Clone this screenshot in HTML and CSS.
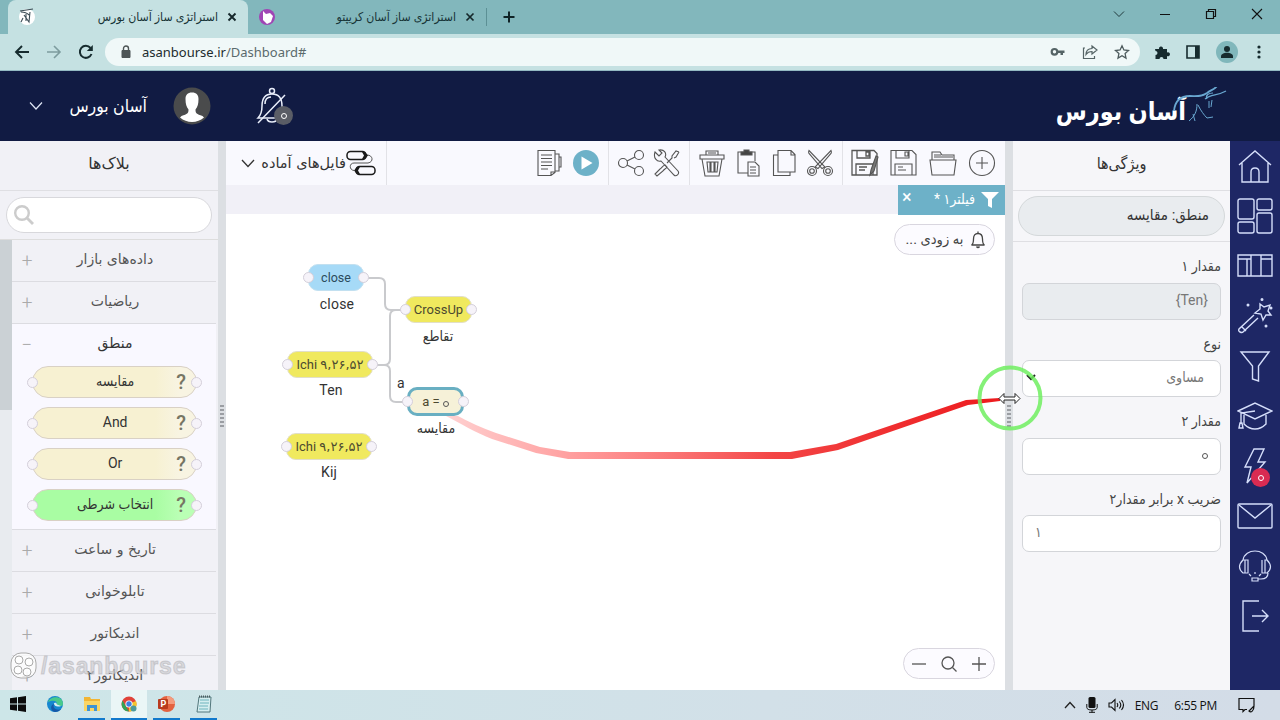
FILE: index.html
```
<!DOCTYPE html>
<html lang="fa">
  <head>
    <meta charset="utf-8">
    <title>استراتژی ساز آسان بورس</title>
    <link rel="stylesheet" href="styles.css">
  </head>
  <body>
    <div class="tabs">
      <div class="tab active">
        <svg width="18" height="18" viewBox="0 0 18 18"><circle cx="9" cy="9" r="8" fill="#fff"/><path d="M2 3l13-2M3 4c3 0 6 1 8 3M8 6v7M12 4l-1 10-5-7M5 10l-2 4" stroke="#3b4c55" stroke-width="1.100" fill="none"/></svg>
        <span class="name" dir="rtl">استراتژی ساز آسان بورس</span>
        <svg width="12" height="12" viewBox="0 0 12 12"><path d="M2.500 2.500l7 7m0-7l-7 7" stroke="#16282b" stroke-width="1.900"/></svg>
      </div>
      <div class="tab">
        <svg width="18" height="18" viewBox="0 0 18 18"><circle cx="9" cy="9" r="8" fill="#a045b5"/><path d="M5 3l3 3 4-1 3 3-2 6-4 2-4-4z" fill="#fff"/></svg>
        <span class="name" dir="rtl">استراتژی ساز آسان کریپتو</span>
        <svg width="12" height="12" viewBox="0 0 12 12"><path d="M2.500 2.500l7 7m0-7l-7 7" stroke="#16282b" stroke-width="1.700"/></svg>
      </div>
      <div class="newtab"><svg width="14" height="14" viewBox="0 0 14 14"><path d="M7 1.500v11M1.500 7h11" stroke="#0f2326" stroke-width="2"/></svg></div>
      <div class="winbtns">
        <svg width="14" height="14" viewBox="0 0 14 14"><path d="M2 4.500l5 5 5-5" fill="none" stroke="#20393c"/></svg>
        <svg width="14" height="14" viewBox="0 0 14 14"><path d="M2 7.500h10" stroke="#111"/></svg>
        <svg width="14" height="14" viewBox="0 0 14 14"><path d="M2.500 4.500h7v7h-7zM4.500 4.500v-2h7v7h-2" fill="none" stroke="#111" stroke-width="1.200"/></svg>
        <svg width="14" height="14" viewBox="0 0 14 14"><path d="M2 2l10 10m0-10L2 12" stroke="#111" stroke-width="1.100"/></svg>
      </div>
    </div>

    <div class="addressbar">
      <div class="navbtns">
        <svg width="16" height="16" viewBox="0 0 16 16"><path d="M15 8H2.500M8 2L2 8l6 6" fill="none" stroke="#162b2e" stroke-width="1.900"/></svg>
        <svg width="16" height="16" viewBox="0 0 16 16"><path d="M1 8h12.500M8 2l6 6-6 6" fill="none" stroke="#7d9c9e" stroke-width="1.600"/></svg>
        <svg width="16" height="16" viewBox="0 0 16 16"><path d="M13.500 10A6 6 0 1 1 12.500 4" fill="none" stroke="#162b2e" stroke-width="2"/><path d="M14.800 1v6h-6z" fill="#162b2e"/></svg>
      </div>
      <div class="omnibox">
        <svg width="12" height="14" viewBox="0 0 12 14"><path d="M2 5.500h8v7H2z" fill="#4d5556" stroke="#4d5556"/><path d="M3.500 6V3.500a2.500 2.500 0 0 1 5 0V6" fill="none" stroke="#4d5556" stroke-width="1.400"/></svg>
        <span class="url">asanbourse.ir<span>/Dashboard#</span></span>
        <svg width="16" height="16" viewBox="0 0 16 16"><path d="M8 6.500h6.500V9H13v2h-2.500V9H8z" fill="#556466"/><circle cx="4.500" cy="7.800" r="2.800" fill="none" stroke="#556466" stroke-width="2.200"/></svg>
        <svg width="16" height="16" viewBox="0 0 16 16"><path d="M3 4H1.500v10.500h11V12" fill="none" stroke="#556466" stroke-width="1.200"/><path d="M10 2l5 4-5 4V7.500c-3 0-5 1.500-6 3 0-3.500 2.500-5.800 6-6z" fill="none" stroke="#556466" stroke-width="1.200"/></svg>
        <svg width="16" height="16" viewBox="0 0 16 16"><path d="M8 1.800l1.900 4.200 4.600.5-3.400 3.100.9 4.500L8 11.800l-4 2.300.9-4.500L1.500 6.500 6.100 6z" fill="none" stroke="#4d5b5d" stroke-width="1.300"/></svg>
      </div>
      <div class="exts">
        <svg width="16" height="16" viewBox="0 0 16 16"><path d="M1 5h4a2 2 0 1 1 4-1v1h4v3.500a2 2 0 1 1 0 3.500v3H9.500a2 2 0 0 0-4 0H1.500v-4a2 2 0 0 0 0-4z" fill="#162b2e"/></svg>
        <svg width="16" height="16" viewBox="0 0 16 16"><path d="M2 2h12v12H2z" fill="none" stroke="#162b2e" stroke-width="1.600"/><path d="M10 2h4v12h-4z" fill="#162b2e"/></svg>
        <svg width="22" height="22" viewBox="0 0 22 22"><circle cx="11" cy="11" r="11" fill="#80b7bb"/><circle cx="11" cy="8" r="3" fill="#162b2e"/><path d="M5 17v-1.500c0-2.500 3-3.700 6-3.700s6 1.200 6 3.700V17z" fill="#162b2e"/></svg>
        <svg width="16" height="16" viewBox="0 0 16 16"><g fill="#162b2e"><circle cx="6" cy="3" r="1.600"/><circle cx="6" cy="8" r="1.600"/><circle cx="6" cy="13" r="1.600"/></g></svg>
      </div>
    </div>

    <div class="header">
      <svg width="14" height="10" viewBox="0 0 14 10"><path d="M1 1.500l6 6.500 6-6.500" fill="none" stroke="#dfe6f5" stroke-width="1.200"/></svg>
      <span class="user" dir="rtl">آسان بورس</span>
      <svg width="38" height="38" viewBox="0 0 38 38"><circle cx="19" cy="19" r="18.500" fill="#4a4b4c"/><path d="M12.500 12c0-4 2-6.500 6.500-6.500s6.500 2.500 6.500 6.500c0 5-1 8-3 10.500 0 4 1 4.500 7 6.500l1.500 1.500A18.500 18.500 0 0 1 7 30.500L8.500 29c6-2 7-2.500 7-6.500-2-2.500-3-5.500-3-10.500z" fill="#fff"/></svg>
      <div class="alarm">
        <svg width="34" height="38" viewBox="0 0 34 38"><g fill="none" stroke="#e9eefa" stroke-width="1.500"><path d="M2 31c3-3 4-6 4-12 0-7 3-12 10-12s10 5 10 12c0 6 1 9 4 12z"/><path d="M9 17c0-4 2-7 6-7"/><circle cx="16" cy="4" r="2.500"/><path d="M11 32c1 4 9 4 10 0M2 36L29 8"/></g></svg>
        <span class="badge grey"><span class="zero">۰</span></span>
      </div>
      <div class="logo">
        <span dir="rtl">آسان بورس</span>
        <svg width="54" height="38" viewBox="0 0 54 38"><g fill="none" stroke="#69a7d0"><path d="M1 24C2 13 8 9 17 9c7 0 11 1 17-3 4-3 8-4 10-7" stroke-width="1.800"/><path d="M32 12c6-5 12-3 21-8M34 12c-2-4 2-6 6-6" stroke-width="1.200"/><path d="M24 17c0 7-2 12-8 17M25 18c3 6 6 10 9 13l6-1M36 14v7M39 13l-1 7M20 27l2 7" stroke-width="1"/></g></svg>
      </div>
    </div>

    <div class="main">
      <div class="blocks">
        <h2>بلاک‌ها</h2>
        <div class="search"><div><svg width="24" height="24" viewBox="0 0 24 24"><circle cx="9" cy="9" r="6.800" fill="none" stroke="#ccc" stroke-width="2.400"/><path d="M14 14l6 6" stroke="#ccc" stroke-width="2.800"/></svg></div></div>
        <div class="list">
          <div class="scroll"><div></div></div>
          <div class="items">
            <div class="item"><i>+</i><span>داده‌های بازار</span></div>
            <div class="item"><i>+</i><span>ریاضیات</span></div>
            <div class="open">
              <div class="item"><i>−</i><span>منطق</span></div>
              <div class="pill"><b></b><span>مقایسه</span><em>?</em><b></b></div>
              <div class="pill"><b></b><span>And</span><em>?</em><b></b></div>
              <div class="pill"><b></b><span>Or</span><em>?</em><b></b></div>
              <div class="pill green"><b></b><span>انتخاب شرطی</span><em>?</em><b></b></div>
            </div>
            <div class="item"><i>+</i><span>تاریخ و ساعت</span></div>
            <div class="item"><i>+</i><span>تابلوخوانی</span></div>
            <div class="item"><i>+</i><span>اندیکاتور</span></div>
            <div class="item"><i>+</i><span>اندیکاتور۲</span></div>
          </div>
        </div>
      </div>
      <div class="splitter"><span></span></div>

      <div class="editor">
        <div class="toolbar">
          <div class="ready">
            <svg width="14" height="9" viewBox="0 0 14 9"><path d="M1 1l6 6.500L13 1" fill="none" stroke="#333" stroke-width="1.300"/></svg>
            <span dir="rtl">فایل‌های آماده</span>
            <svg width="30" height="26" viewBox="0 0 30 26"><g fill="none" stroke="#1b1b1b" stroke-width="1.500"><rect x="1" y="1.500" width="19" height="8" rx="3.500"/><rect x="10" y="16.500" width="19" height="8" rx="3.500"/><path d="M21 5c6 0 7 7 1 8H8c-5 0-5 7 0 7.500" stroke-width="1" stroke="#555"/></g><path d="M16 2h3l3 3.500L19 9h-3l2-3.500zM14 17h-3l-3 3.500 3 3.500h3l-2-3.500z" fill="#1b1b1b"/></svg>
          </div>
          <div class="group g1">
            <svg viewBox="0 0 28 28"><path d="M3 1.500h17v22l-4 3H3zM16 26v-3h4M20 5h4v17h-4M24 8h2v10h-2M6 6h11M6 9.500h11M6 13h11M6 16.500h11M6 20h7"/></svg>
            <svg viewBox="0 0 28 28"><circle cx="14" cy="14" r="13" fill="#6db1c8" stroke="none"/><path d="M9.500 7.500l11 6.500-11 6.500z" fill="#fff" stroke="none"/></svg>
          </div>
          <div class="group g2">
            <svg viewBox="0 0 28 28"><circle cx="6" cy="14" r="4.500"/><circle cx="22" cy="6" r="4.500"/><circle cx="22" cy="22" r="4.500"/><path d="M10 12l8-4M10 16l8 4"/></svg>
            <svg viewBox="0 0 28 28"><path d="M2 3l4 4 3-3-3-3c5-1 8 3 6 7l13 14c2 3-2 6-4 4L8 12C4 13 0 9 2 3zM26 3l-3-1-4 5v2l-5 5M21 9l2-1 3-5M12 16c-3 1-3 3-5 4l-5 5 2 2 6-5c1-2 3-2 4-4z"/></svg>
          </div>
          <div class="group g3">
            <svg viewBox="0 0 28 28"><path d="M2 6h24v4H2zM8 6V2h12v4M10 4h8M4 10l3 17h14l3-17M9 13h3v10h-2zM13 13h3v10h-3zM17 13h3l-1 10h-2z"/></svg>
            <svg viewBox="0 0 28 28"><path d="M14 24H4V3h17v9M14 13h7l4 4v10H14zM16 18h6M16 21h6M16 24h6"/><path d="M7 3h3V1h5v2h3v3H7z" fill="#444"/></svg>
            <svg viewBox="0 0 28 28"><path d="M8 1.500h13l4 4V23H8zM21 2v4h4M8 6H3.500v20.500H20V23"/></svg>
            <svg viewBox="0 0 28 28"><circle cx="6" cy="22" r="4.500"/><circle cx="22" cy="22" r="4.500"/><circle cx="6" cy="22" r="2.300"/><circle cx="22" cy="22" r="2.300"/><path d="M3 1.500q-1 2 0 3l13 15 3-1.500zM25 1.500q1 2 0 3L12 19.500 9 18z"/></svg>
          </div>
          <div class="group g4">
            <svg viewBox="0 0 28 28"><path d="M1 1.500h22l3 3V26H1zM5 26V15h17v11M6 1.500V9h13V1.500M15 3h3v4h-3zM8 18h8M8 21h6" stroke-width="1.300"/><path d="M27 8l-2-1-5 14-1 5 4-4z" fill="#777"/></svg>
            <svg viewBox="0 0 28 28"><path d="M1 1.500h21l4 4V26H1zM5 26V15h17v11M6 1.500V9h13V1.500M15 3h3v4h-3zM8 18h5M8 21h8"/></svg>
            <svg viewBox="0 0 28 28"><path d="M1 11h26l-2 15H3zM3 11V3h8l2 3h12v5M5 8h19M5 6h7"/></svg>
            <svg viewBox="0 0 28 28"><circle cx="14" cy="14" r="12.500"/><path d="M14 8v12M8 14h12"/></svg>
          </div>
        </div>
        <div class="files">
          <div class="file"><i>×</i><span dir="rtl">فیلتر۱ *</span><svg width="18" height="18" viewBox="0 0 18 18"><path d="M0 1h18l-7 7v9l-4-2V8z" fill="#fff"/></svg></div>
        </div>
        <div class="canvas">
          <svg class="wires" width="779" height="476"><path d="M139 64h14q6 0 6 6v20q0 6 6 6h14M145 151h13q6 0 6-6v-43q0-6 6-6M158 151q6 0 6 6v25q0 6 6 6h12"/></svg>
          <div class="soon"><span dir="rtl">به زودی ...</span><svg width="16" height="18" viewBox="0 0 16 18"><path d="M1.500 14c2-1 2-3 2-6 0-3.500 1.500-5.500 4.500-5.500s4.500 2 4.500 5.500c0 3 0 5 2 6zM8 2.500V.5M6.500 15.500q1.500 2 3 0" fill="none" stroke="#444" stroke-width="1.300"/></svg></div>
          <div class="node close"><b></b>close<b></b></div><div class="cap c1">close</div>
          <div class="node cross"><b></b>CrossUp<b></b></div><div class="cap c2">تقاطع</div>
          <div class="node ten"><b></b><span>Ichi <u>۹,۲۶,۵۲</u></span><b></b></div><div class="cap c3">Ten</div>
          <div class="node kij"><b></b><span>Ichi <u>۹,۲۶,۵۲</u></span><b></b></div><div class="cap c4">Kij</div>
          <div class="node cmp"><b></b><span>a = <span class="zero">۰</span></span><b></b></div><div class="cap c5">مقایسه</div>
          <div class="cap ca">a</div>
          <div class="zoom">
            <svg width="16" height="16" viewBox="0 0 16 16"><path d="M1 8h14"/></svg>
            <svg width="16" height="16" viewBox="0 0 16 16"><circle cx="7" cy="7" r="6"/><path d="M11.500 11.500l4 4"/></svg>
            <svg width="16" height="16" viewBox="0 0 16 16"><path d="M1 8h14M8 1v14"/></svg>
          </div>
        </div>
      </div>
      <div class="splitter"><span></span></div>

      <div class="props" dir="rtl">
        <h2>ویژگی‌ها</h2>
        <div class="kind"><div>منطق: مقایسه</div></div>
        <div class="fields">
          <label>مقدار ۱</label>
          <div class="input off" dir="ltr">{Ten}</div>
          <label>نوع</label>
          <div class="input select"><span>مساوی</span><svg width="10" height="7" viewBox="0 0 10 7"><path d="M1 1l4 4 4-4" fill="none" stroke="#222" stroke-width="2"/></svg></div>
          <label>مقدار ۲</label>
          <div class="input"><span class="zero">۰</span></div>
          <label>ضریب x برابر مقدار۲</label>
          <div class="input left">۱</div>
        </div>
      </div>

      <div class="nav">
        <svg viewBox="0 0 36 36"><path d="M2 17L18 3l16 14M5 15v19h26V15M14 34V24q0-4 4-4t4 4v10"/></svg>
        <svg viewBox="0 0 36 36"><rect x="1" y="1" width="16" height="20" rx="2"/><rect x="20" y="1" width="15" height="11" rx="2"/><rect x="1" y="24" width="16" height="11" rx="2"/><rect x="20" y="15" width="15" height="20" rx="2"/></svg>
        <svg viewBox="0 0 36 36"><path d="M1 7h34v21H1zM10 11v17M14 7v21M24 7v21M1 11h13M24 11h11"/></svg>
        <svg viewBox="0 0 36 36"><path d="M23 6l4 3 6-2-2 6 3 4-5 0-3 5-2-6-6-1 5-4zM17 17L2 31q-1 2 1 3t3 0l15-14M5 29l4 4"/><g fill="#e5ecff"><circle cx="11" cy="7" r=".8"/><circle cx="25" cy="1.500" r=".8"/><circle cx="34" cy="10" r=".8"/><circle cx="29" cy="28" r=".8"/></g></svg>
        <svg viewBox="0 0 36 36"><path d="M4 4h28L21.500 18v15l-6-2V18z"/></svg>
        <svg viewBox="0 0 36 36"><path d="M1 13L18 5l17 8-17 8zM18 13L4 15v11M7 17v9q5 5 11 5t11-5v-9M2 30l1-5h2l1 5z"/></svg>
        <div class="bolt"><svg viewBox="0 0 36 36"><path d="M17 1h10l-6 13h7L10 35l4-16H8z"/></svg><span class="badge red"><span class="zero">۰</span></span></div>
        <svg viewBox="0 0 36 36"><rect x="1" y="6" width="34" height="24" rx="1"/><path d="M2 7l16 13L34 7"/></svg>
        <svg viewBox="0 0 36 36"><path d="M6 12C8 0 28 0 30 12M8 12v13H6q-7-6 0-13zM11 12v13H8V12zM28 12v13h2q7-6 0-13zM25 12v13h3V12M31 25q0 6-7 6h-3M15 30h6v3h-6zM18 26v-2M14 28l-2-2M22 28l2-2" stroke-width="1.200"/></svg>
        <svg viewBox="0 0 36 36"><path d="M22 3H6v30h16M15 18h16M25 12l6 6-6 6"/></svg>
      </div>
    </div>

    <div class="taskbar">
      <div class="apps">
        <div><svg width="16" height="16" viewBox="0 0 16 16"><path d="M0 2.300L7 1.300v6.200H0zM8 1.200L16 0v7.500H8zM0 8.500h7v6.300L0 13.800zM8 8.500h8V16l-8-1.200z" fill="#0b0b0b"/></svg></div>
        <div><svg width="16" height="16" viewBox="0 0 16 16"><circle cx="8" cy="8" r="8" fill="#1687d0"/><path d="M1 6C3 0 16-1 16 8c0 3-6 3-6 0 0-4-5-4-9-2z" fill="#49c98b"/><path d="M7 8c-2 4 3 7 7 5-1 2-4 3-6 3-5-1-5-7-1-8z" fill="#1658a8"/><path d="M10 8.500c-1-2 0-2-3-1.500 0 4 4 4 7 3z" fill="#d7eef1"/></svg></div>
        <div class="run"><svg width="18" height="16" viewBox="0 0 18 16"><path d="M1 1h6l1 2h9v12H1z" fill="#f2b534"/><path d="M1 5h16v10H1z" fill="#fbd564"/><path d="M4 15V9h10v6h-3v-3H7v3z" fill="#3f93d3"/></svg></div>
        <div class="run current"><svg width="16" height="16" viewBox="0 0 16 16"><circle cx="8" cy="8" r="7.500" fill="#e0453a"/><path d="M8 8l7-3a7.500 7.500 0 0 1-7 10.500z" fill="#f5c52c"/><path d="M1.500 4.500L8 15.500C2 15.500-1 9 1.500 4.500z" fill="#32a457"/><circle cx="8" cy="8" r="3.600" fill="#fff"/><circle cx="8" cy="8" r="2.700" fill="#3f7fe0"/><circle cx="12.500" cy="12.500" r="3" fill="#4c9a9c"/></svg></div>
        <div class="run"><svg width="17" height="16" viewBox="0 0 17 16"><circle cx="9" cy="8" r="8" fill="#e4623f"/><path d="M9 0a8 8 0 0 1 8 8H9z" fill="#f49b7d"/><rect y="3" width="10" height="10" rx="1" fill="#b93a1e"/><text x="2.500" y="11" class="pp">P</text></svg></div>
        <div class="run"><svg width="16" height="18" viewBox="0 0 16 18"><path d="M3 2h12l-1 15H1z" fill="#d5eef0" stroke="#53777c"/><path d="M4 5h9M4 8h9M3 11h9M3 14h9" stroke="#6fb4bd"/><path d="M3 1.500h12" stroke="#4b5c5f" stroke-width="2" stroke-dasharray="1 1"/></svg></div>
      </div>
      <div class="tray">
        <svg width="12" height="8" viewBox="0 0 12 8"><path d="M1 7l5-5.500L11 7" fill="none" stroke="#222" stroke-width="1.300"/></svg>
        <svg width="12" height="16" viewBox="0 0 12 16"><rect x="2.500" y="0" width="7" height="11" rx="1.500" fill="#111"/><path d="M.8 7v3.500Q1 13 6 13t5.200-2.500V7M6 13v2.500M3 15.300h6" fill="none" stroke="#111"/></svg>
        <svg width="17" height="14" viewBox="0 0 17 14"><path d="M1 5h2.500L7 1.500v11L3.500 9H1zM9 5q1.500 2 0 4M11.300 3.500q3 3.500 0 7M13.500 2q4 5 0 10" fill="none" stroke="#111" stroke-width="1.100"/></svg>
        <span class="lang">ENG</span>
        <span class="clock">6:55 PM</span>
        <svg width="17" height="16" viewBox="0 0 17 16"><path d="M9 12.500H7l-2 2v-2H1v-11h15v7M16 9l-5 5c2 2 5 0 5-5z" fill="none" stroke="#111" stroke-width="1.200"/></svg>
      </div>
    </div>

    <svg class="trail" width="1280" height="720">
      <defs><linearGradient id="fade" gradientUnits="userSpaceOnUse" x1="450" y1="0" x2="990" y2="0"><stop offset="0" stop-color="#f77" stop-opacity=".35"/><stop offset=".25" stop-color="#f77" stop-opacity=".75"/><stop offset=".6" stop-color="#f34545"/><stop offset="1" stop-color="#ed1c1f"/></linearGradient></defs>
      <path d="M446 416C460 423 476 433 492 439L536 453L568 459H792L838 450L968 405L1000 401V398L966 400L836 444L790 452H570L540 447L496 433Q474 425 458 416z" fill="url(#fade)"/>
      <circle cx="1010" cy="398" r="30.500" fill="none" stroke="#70ef60" stroke-opacity=".85" stroke-width="4"/>
      <path d="M999 398.500l5-5v3.500h11v-3.500l5 5-5 5V400h-11v3.500z" fill="#fff" stroke="#222"/>
    </svg>
    <div class="watermark">
      <svg width="29" height="29" viewBox="0 0 29 29"><g fill="#fff" fill-opacity=".7" stroke="#aaa"><rect x="2" y="2" width="25" height="25" rx="10"/><circle cx="10" cy="9" r="4"/><circle cx="20" cy="11" r="4"/><circle cx="9" cy="19" r="4"/><circle cx="18" cy="21" r="4"/></g></svg>
      <span>/asanbourse</span>
    </div>
  </body>
</html>
```
FILE: styles.css
```
* {
  box-sizing: border-box;
}
body {
  margin: 0;
  width: 1280px;
  height: 720px;
  overflow: hidden;
  display: flex;
  flex-direction: column;
  font-family: Roboto, "DejaVu Sans Condensed", "DejaVu Sans", sans-serif;
  font-size: 14px;
  color: #333;
}
svg {
  display: block;
  flex: none;
}

/* browser */
.tabs {
  height: 34px;
  background: #82b7bc;
  display: flex;
}
.tab {
  display: flex;
  align-items: center;
  width: 238px;
  padding: 0 10px;
  color: #173336;
}
.tab.active {
  background: #c5e1e2;
  border-radius: 8px 8px 0 0;
  width: 240px;
  margin-left: 8px;
}
.name {
  flex: 1;
  text-align: right;
  padding-right: 8px;
  white-space: nowrap;
  font-size: 12.200px;
}
.newtab {
  border-left: 1px solid #5c9095;
  height: 18px;
  margin: 8px 0 0;
  padding: 2px 0 0 15px;
}
.winbtns {
  margin-left: auto;
  display: flex;
  align-items: center;
  gap: 32px;
  padding: 0 16px 6px 0;
}
.addressbar {
  height: 37px;
  background: #c5e1e2;
  border-bottom: 1px solid #93b9c2;
  display: flex;
  align-items: center;
}
.navbtns {
  display: flex;
  gap: 16px;
  width: 105px;
  padding-left: 14px;
}
.omnibox {
  width: 1035px;
  height: 28px;
  border-radius: 14px;
  background: #f0f8f8;
  display: flex;
  align-items: center;
  gap: 16px;
  padding: 0 10px 0 15px;
}
.url {
  font: 13px "Noto Sans", sans-serif;
  flex: 1;
  margin-left: -6px;
  color: #202b2d;
}
.url span {
  color: #5a6a6c;
}
.exts {
  display: flex;
  align-items: center;
  gap: 15px;
  padding-left: 14px;
}

/* site header */
.header {
  height: 70px;
  background: #111b43;
  display: flex;
  align-items: center;
  padding-left: 29px;
}
.user {
  color: #fff;
  font-size: 17.500px;
  margin: 0 26px;
  width: 78px;
  white-space: nowrap;
}
.alarm {
  position: relative;
  margin-left: 45px;
}
.badge {
  position: absolute;
  width: 19px;
  height: 19px;
  border-radius: 50%;
  display: flex;
  align-items: center;
  justify-content: center;
}
/* open ring digit, the fallback face draws zero as a dot */
.zero {
  display: inline-block;
  width: 6px;
  height: 6px;
  border: 1px solid #555;
  border-radius: 50%;
  color: transparent;
  font-size: 3px;
  line-height: 4px;
  text-align: center;
  vertical-align: 1px;
}
.badge .zero {
  border: 1.500px solid #fff;
}
.input .zero {
  vertical-align: 3px;
}
.grey {
  background: #5a5d66;
  left: 18px;
  top: 19px;
}
.red {
  background: #d92b52;
  left: 14px;
  top: 20px;
}
.logo {
  margin-left: auto;
  display: flex;
  color: #fff;
  padding-right: 53px;
}
.logo span {
  font-size: 25px;
  font-weight: bold;
  line-height: 30px;
  white-space: nowrap;
  padding-top: 11px;
  margin-right: -13px;
}
.logo svg {
  margin-top: 1px;
}

/* columns */
.main {
  height: 549px;
  display: flex;
}
h2 {
  margin: 0;
  height: 50px;
  border-bottom: 1px solid #dfdfe3;
  text-align: center;
  font-size: 16px;
  font-weight: normal;
  line-height: 45px;
}
.blocks {
  width: 218px;
  background: #f1f1f6;
  display: flex;
  flex-direction: column;
}
.blocks h2 {
  font-family: "DejaVu Sans", sans-serif;
}
.search {
  height: 49px;
  padding: 6px 6px 0;
  border-bottom: 1px solid #ddd;
}
.search div {
  height: 36px;
  border: 1px solid #d8d8dc;
  border-radius: 18px;
  background: #fff;
  padding: 6px;
}
.list {
  flex: 1;
  display: flex;
  min-height: 0;
}
.scroll {
  width: 12px;
  background: #e8ebef;
}
.scroll div {
  height: 170px;
  background: #cbd1d5;
}
.items {
  flex: 1;
  overflow: hidden;
  margin-right: 2px;
}
.item {
  height: 42px;
  border-bottom: 1px solid #dcdce1;
  display: flex;
  line-height: 39px;
  color: #555;
}
.item i {
  font: 300 19px/42px Roboto, sans-serif;
  color: #aaa;
  width: 30px;
  text-align: center;
}
.item span {
  flex: 1;
  text-align: center;
  padding-right: 28px;
  font-family: "DejaVu Sans", sans-serif;
}
.open {
  background: #f9f8ff;
  height: 206px;
  border-bottom: 1px solid #dcdce1;
}
.open .item {
  border: none;
  color: #333;
}
.pill {
  width: 165px;
  height: 32px;
  margin: 0 0 9px 20px;
  border: 1px solid #d9d1c5;
  border-radius: 16px;
  background: linear-gradient(90deg, #f7f1d2 75%, #f8f4e2 90%);
  display: flex;
  align-items: center;
}
.pill span {
  flex: 1;
  text-align: center;
  padding: 0 0 3px 22px;
}
.pill em {
  font-size: 20px;
  font-style: normal;
  font-weight: 500;
  color: #777664;
  margin-right: 11px;
}
.pill.green {
  background: linear-gradient(90deg, #a9fda3 75%, #baffb5 90%);
}
.pill b, .node b {
  width: 11px;
  height: 11px;
  border: 1px solid #d4cfda;
  border-radius: 50%;
  background: #f6f3f9;
  flex: none;
  margin: 0 -6px;
}
.splitter {
  width: 8px;
  background: #dcdfe3;
  display: flex;
  align-items: center;
  justify-content: center;
}
.splitter span {
  width: 4px;
  height: 22px;
  background: repeating-linear-gradient(#9b9ea3 0 2px, transparent 2px 4px);
}

/* editor */
.editor {
  width: 779px;
  background: #fff;
}
.toolbar {
  height: 44px;
  background: #f9f9fe;
  display: flex;
}
.ready {
  width: 161px;
  border-right: 1px solid #e2e2e7;
  display: flex;
  align-items: center;
  padding-left: 15px;
}
.ready span {
  width: 88px;
  margin-left: 3px;
  white-space: nowrap;
  font: 14.500px "DejaVu Sans", sans-serif;
}
.group {
  display: flex;
  align-items: center;
  border-left: 1px solid #e2e2e7;
}
.group svg {
  width: 28px;
  height: 28px;
  fill: none;
  stroke: #555;
  stroke-width: 1.100;
}
.g1 {
  margin-left: auto;
  width: 84px;
  border: none;
  padding-left: 11px;
  gap: 9px;
}
.g2 {
  width: 81px;
  padding-left: 8px;
  gap: 8px;
}
.g3 {
  width: 153px;
  padding-left: 8px;
  gap: 8px;
}
.g4 {
  width: 163px;
  padding-left: 8px;
  gap: 11px;
}
.files {
  height: 29px;
  background: #f1f0f7;
}
.file {
  width: 107px;
  height: 30px;
  margin-left: auto;
  background: #6db1c8;
  color: #fff;
  display: flex;
  align-items: center;
  padding: 0 6px 0 4px;
}
.file i {
  font: 18px/10px Roboto, sans-serif;
  margin-bottom: 6px;
}
.file span {
  flex: 1;
  padding: 0 6px 3px 0;
}
.canvas {
  position: relative;
  height: 476px;
}
.soon, .zoom {
  position: absolute;
  left: 668px;
  top: 10px;
  width: 101px;
  height: 31px;
  border: 1px solid #d9d6df;
  border-radius: 16px;
  background: #fcfbff;
  display: flex;
  align-items: center;
  justify-content: center;
  gap: 7px;
  color: #444;
}
.soon {
  padding-left: 3px;
  font-size: 14.500px;
}
.zoom {
  left: 677px;
  top: 434px;
  width: 92px;
  gap: 14px;
}
.zoom svg {
  fill: none;
  stroke: #555;
  stroke-width: 1.300;
}
.wires {
  position: absolute;
  fill: none;
  stroke: #c9cacd;
  stroke-width: 2;
}
.node {
  position: absolute;
  height: 27px;
  border: 1px solid #e2dfc8;
  border-radius: 10px;
  background: #f0e95e;
  color: #4c4930;
  font-size: 13px;
  display: flex;
  align-items: center;
  justify-content: space-between;
  white-space: nowrap;
}
.node u {
  text-decoration: none;
  font: 13px "DejaVu Sans", sans-serif;
}
.node.close {
  left: 82px;
  top: 50px;
  width: 56px;
  background: #a6daf7;
  border-color: #c2e0f0;
  color: #2b4b5c;
  font-size: 12.500px;
}
.node.cross {
  left: 179px;
  top: 82px;
  width: 67px;
}
.node.ten {
  left: 61px;
  top: 137px;
  width: 86px;
}
.node.kij {
  left: 60px;
  top: 219px;
  width: 86px;
}
.node.cmp {
  left: 181px;
  top: 173px;
  width: 57px;
  height: 29px;
  border: 3px solid #69afc2;
  background: #f6f1d8;
}
.cmp b {
  margin: 0 -8px;
}
.cap {
  position: absolute;
  width: 80px;
  text-align: center;
  line-height: 20px;
  letter-spacing: .2px;
}
.c1 { left: 71px; top: 80px; }
.c2 { left: 172px; top: 112px; letter-spacing: 0; }
.c3 { left: 65px; top: 166px; }
.c4 { left: 63px; top: 248px; }
.c5 { left: 170px; top: 204px; letter-spacing: 0; }
.ca { left: 135px; top: 159px; }

/* properties */
.props {
  width: 217px;
  background: #f6f6f9;
}
.kind {
  height: 51px;
  padding: 5px;
  border-bottom: 1px solid #dfdfe3;
}
.kind div {
  height: 40px;
  border: 1px solid #d4d8da;
  border-radius: 20px;
  background: #e9ecef;
  padding: 0 15px;
  font-size: 15px;
  line-height: 36px;
}
.fields {
  padding: 0 9px;
}
label {
  display: block;
  height: 40.500px;
  line-height: 48px;
  color: #444;
  white-space: nowrap;
}
.input {
  height: 37px;
  border: 1px solid #d3d5d9;
  border-radius: 7px;
  background: #fff;
  padding: 0 12px;
  line-height: 32px;
  color: #777;
  text-align: right;
}
.off {
  background: #e9ecef;
}
.select {
  display: flex;
  justify-content: space-between;
  align-items: center;
  padding: 0 16px 3px 3px;
}
.left {
  text-align: left;
}
.nav {
  width: 50px;
  background: #1e2765;
  display: flex;
  flex-direction: column;
  align-items: center;
  padding-top: 7px;
  gap: 14px;
}
.nav svg {
  width: 36px;
  height: 36px;
  fill: none;
  stroke: #d5defa;
  stroke-width: 1.400;
}
.bolt {
  position: relative;
}

/* windows taskbar */
.taskbar {
  height: 30px;
  background: linear-gradient(90deg, #cde6e8, #d2e0e8 60%, #d3dce7);
  display: flex;
  justify-content: space-between;
}
.apps {
  display: flex;
  gap: 10px;
  padding-left: 4px;
}
.apps div {
  width: 27px;
  display: flex;
  align-items: center;
  justify-content: center;
  border-bottom: 2px solid transparent;
}
.apps .run {
  border-color: #1279cc;
}
.apps .current {
  width: 36px;
  margin: 0 -4px;
  background: #eaf6f6;
}
.pp {
  font: bold 9px Roboto, sans-serif;
  fill: #fff;
}
.tray {
  display: flex;
  align-items: center;
  font: 12px "Open Sans", sans-serif;
  color: #111;
  gap: 10px;
  padding-right: 25px;
}
.lang {
  letter-spacing: -.3px;
}
.clock {
  margin: 0 11px 0 6px;
  letter-spacing: -.3px;
}

.trail {
  position: absolute;
  left: 0;
  top: 0;
}
.watermark {
  position: absolute;
  left: 9px;
  top: 650px;
  display: flex;
  align-items: center;
  gap: 3px;
  font: bold 23px "Liberation Sans", sans-serif;
  letter-spacing: .9px;
  padding-top: 3px;
  color: rgba(205, 205, 209, .7);
  -webkit-text-stroke: 1px rgba(160, 160, 165, .4);
}
.watermark svg {
  margin-top: -3px;
}
```
